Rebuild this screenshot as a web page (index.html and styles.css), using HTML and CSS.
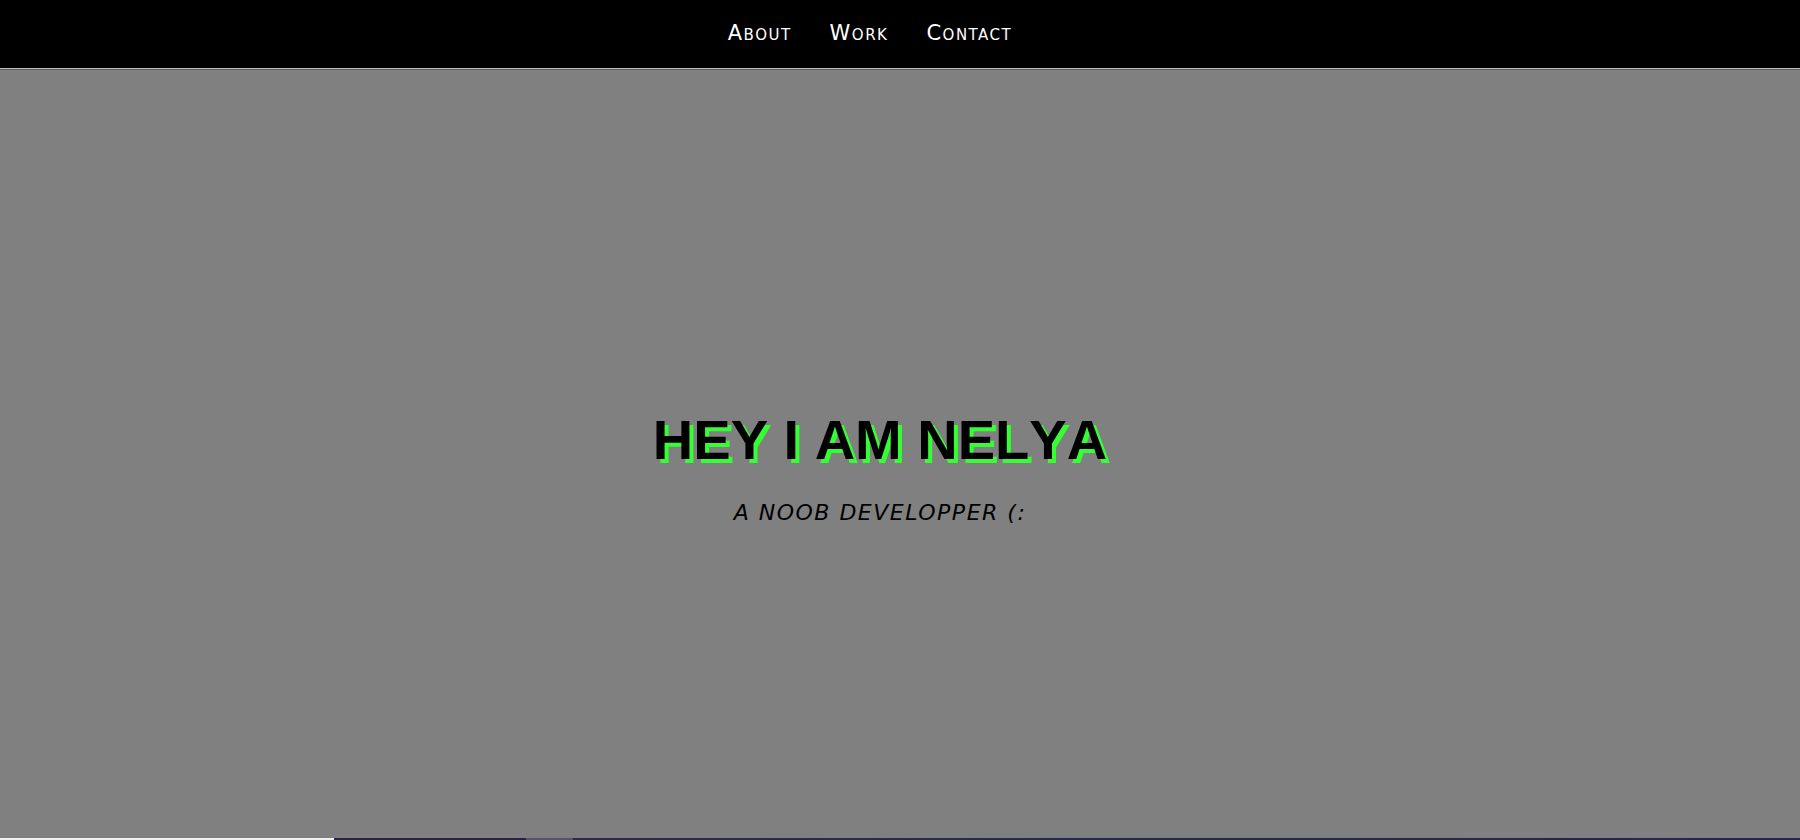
FILE: index.html
```html
<!DOCTYPE html>
<html lang="en">
<head>
<meta charset="utf-8">
<title>Nelya</title>
<link rel="stylesheet" href="styles.css">
</head>
<body>
<nav class="nav">
  <a class="nav-link" href="#about">About</a>
  <a class="nav-link" href="#work">Work</a>
  <a class="nav-link" href="#contact">Contact</a>
</nav>
<div class="nav-rule"></div>
<main class="hero">
  <h1 class="hero-title">HEY I AM NELYA</h1>
  <p class="hero-sub">A NOOB DEVELOPPER (:</p>
</main>
<div class="next-strip"></div>
</body>
</html>
```

FILE: styles.css
```css
html, body {
  margin: 0;
  padding: 0;
  height: 840px;
  overflow: hidden;
  background: #808080;
}
body {
  font-family: "Liberation Sans", Arial, sans-serif;
}
.nav {
  height: 68px;
  box-sizing: border-box;
  padding: 0 60px 2px 0;
  background: #000;
  display: flex;
  justify-content: center;
  align-items: center;
  gap: 38px;
}
.nav-link {
  color: #fff;
  text-decoration: none;
  font-family: "DejaVu Sans", Verdana, sans-serif;
  font-size: 21px;
  font-variant: small-caps;
  letter-spacing: 1.5px;
}
.nav-rule {
  height: 1px;
  background: #bdbdbd;
  border-bottom: 1px solid #5e5e5e;
}
.hero {
  height: 768px;
  display: flex;
  flex-direction: column;
  align-items: center;
  justify-content: center;
  padding: 24px 40px 0 0;
  box-sizing: border-box;
}
.hero-title {
  margin: 0;
  font-size: 56px;
  font-weight: bold;
  font-kerning: none;
  color: #000;
  text-shadow: 4px 4px 0 #33ff33;
  line-height: 1.2;
}
.hero-sub {
  margin: 27px 0 0;
  font-family: "DejaVu Sans", Verdana, sans-serif;
  font-size: 22px;
  line-height: 1.2;
  font-style: italic;
  letter-spacing: 1.5px;
  color: #000;
}
.next-strip {
  height: 2px;
  background: linear-gradient(to right, #f2f2f2 0, #f2f2f2 334px, #2a2050 334px, #2a2050 526px, #5a5070 526px, #5a5070 573px, #302848 573px, #2a2a48 900px, #282850 1200px, #242458 1800px);
}
```
